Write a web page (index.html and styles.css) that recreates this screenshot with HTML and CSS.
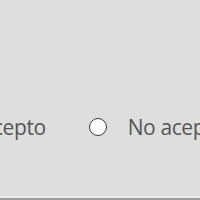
FILE: index.html
```html
<!DOCTYPE html>
<html lang="es">
  <head>
    <meta charset="UTF-8" />
    <meta name="viewport" content="width=device-width, initial-scale=1.0" />
    <title>Consentimiento</title>
    <link rel="stylesheet" href="styles.css">
  </head>
  <body>
    <div class="panel">
      <div class="options">
        <label class="option">
          <span class="radio"></span>
          <span class="option-text">Acepto</span>
        </label>
        <label class="option">
          <span class="radio"></span>
          <span class="option-text">No acepto</span>
        </label>
      </div>
    </div>
  </body>
</html>
```

FILE: styles.css
```css
:root {
  --bg-color: #dedede;
  --text-color: #555;
  --radio-border: #3a3a3a;
  --white: #fff;
}

* {
  margin: 0;
  padding: 0;
  box-sizing: border-box;
  font-family: "Open Sans", "Noto Sans", sans-serif;
}

body {
  background-color: var(--bg-color);
  overflow: hidden;
}

.panel {
  height: 200px;
  padding-top: 116px;
  border-bottom: 2px solid #9c9c9c;
  box-shadow: inset 0 -2px 0 #ececec;
  overflow: hidden;
}

.options {
  display: flex;
  align-items: center;
  gap: 43px;
  margin-left: -59px;
}

.option {
  display: flex;
  align-items: center;
  gap: 21px;
  flex-shrink: 0;
}

.radio {
  width: 18px;
  height: 18px;
  border: 1.5px solid var(--radio-border);
  border-radius: 50%;
  background-color: var(--white);
}

.option-text {
  font-size: 21px;
  line-height: 22px;
  letter-spacing: -0.4px;
  color: var(--text-color);
  white-space: nowrap;
}
```
